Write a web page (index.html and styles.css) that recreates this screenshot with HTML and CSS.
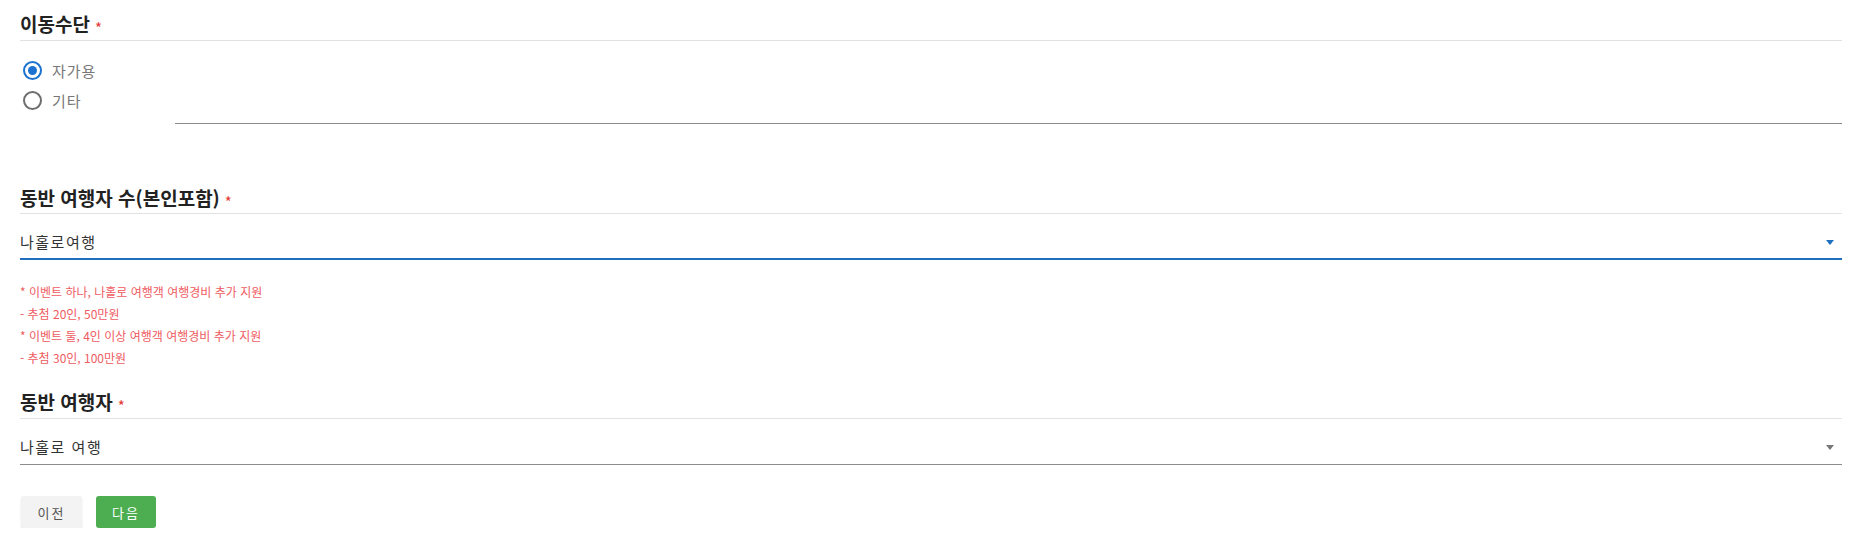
FILE: index.html
```html
<!DOCTYPE html>
<html lang="ko">
<head>
<meta charset="utf-8">
<title>여행 신청</title>
<link rel="stylesheet" href="styles.css">
</head>
<body>
<form class="page">
  <section class="field field-first">
    <h3 class="field-title">이동수단<span class="req">*</span></h3>
    <div class="transport-row">
      <div class="radio-group">
        <label class="radio-item">
          <span class="radio checked"></span>
          <span class="radio-label">자가용</span>
        </label>
        <label class="radio-item">
          <span class="radio"></span>
          <span class="radio-label">기타</span>
        </label>
      </div>
      <div class="other-input"></div>
    </div>
  </section>

  <section class="field field-second">
    <h3 class="field-title">동반 여행자 수(본인포함)<span class="req">*</span></h3>
    <div class="select select-active">
      <span class="select-value">나홀로여행</span>
      <span class="arrow arrow-blue"></span>
    </div>
    <ul class="notes">
      <li>* 이벤트 하나, 나홀로 여행객 여행경비 추가 지원</li>
      <li>- 추첨 20인, 50만원</li>
      <li>* 이벤트 둘, 4인 이상 여행객 여행경비 추가 지원</li>
      <li>- 추첨 30인, 100만원</li>
    </ul>
  </section>

  <section class="field field-third">
    <h3 class="field-title">동반 여행자<span class="req">*</span></h3>
    <div class="select select-plain">
      <span class="select-value">나홀로 여행</span>
      <span class="arrow arrow-gray"></span>
    </div>
  </section>

  <div class="actions">
    <button type="button" class="btn btn-prev">이전</button>
    <button type="button" class="btn btn-next">다음</button>
  </div>
</form>
</body>
</html>
```

FILE: styles.css
```css
* { box-sizing: border-box; }

html, body {
  margin: 0;
  padding: 0;
  background: #ffffff;
}

body {
  font-family: "Noto Sans CJK KR", "Noto Sans", sans-serif;
  color: #222222;
}

.page {
  width: 1842px;
  margin: 0;
  padding: 11px 0 0 20px;
}

.field-title {
  margin: 0;
  font-size: 19px;
  font-weight: 700;
  line-height: 26px;
  color: #222222;
  padding-bottom: 3px;
  border-bottom: 1px solid #e2e2e2;
  display: flex;
  align-items: center;
}

.req {
  color: #e53935;
  font-size: 15px;
  font-weight: 400;
  line-height: 1;
  margin-left: 5px;
  position: relative;
  top: 3px;
}

.transport-row {
  display: flex;
  align-items: flex-start;
  margin-top: 14px;
}

.radio-group {
  width: 155px;
  display: flex;
  flex-direction: column;
}

.radio-item {
  display: flex;
  align-items: center;
  height: 30px;
}

.radio {
  width: 19px;
  height: 19px;
  margin-left: 3px;
  border-radius: 50%;
  border: 2px solid #6e6e6e;
  position: relative;
}

.radio.checked {
  border-color: #1c72d0;
}

.radio.checked::after {
  content: "";
  position: absolute;
  left: 3px;
  top: 3px;
  width: 9px;
  height: 9px;
  border-radius: 50%;
  background: #1c72d0;
}

.radio-label {
  margin-left: 10px;
  font-size: 15px;
  color: #777777;
  letter-spacing: 1px;
}

.other-input {
  flex: 1;
  margin-top: 38px;
  height: 31px;
  border-bottom: 1px solid #8c8c8c;
}

.field-second {
  margin-top: 61px;
}

.field-second .field-title {
  padding-bottom: 2px;
}

.select {
  display: flex;
  align-items: center;
  justify-content: space-between;
  padding: 18px 8px 0 0;
}

.select-active {
  border-bottom: 2px solid #1e6fbe;
  padding-bottom: 6px;
  height: 46px;
}

.select-plain {
  border-bottom: 1px solid #8c8c8c;
  height: 46px;
  padding-bottom: 7px;
}

.select-value {
  font-size: 15px;
  line-height: 20px;
  color: #333333;
  letter-spacing: 1.5px;
}

.arrow {
  width: 0;
  height: 0;
  border-left: 4.5px solid transparent;
  border-right: 4.5px solid transparent;
  border-top: 5px solid #1e6fbe;
}

.arrow-gray {
  border-top-color: #777777;
}

.notes {
  list-style: none;
  margin: 21px 0 0 0;
  padding: 0;
}

.notes li {
  font-size: 12px;
  line-height: 22px;
  color: #ef5b5f;
}

.field-third {
  margin-top: 20px;
}

.actions {
  display: flex;
  gap: 14px;
  margin-top: 31px;
  padding-left: 1px;
}

.btn {
  height: 32px;
  border: none;
  border-radius: 3px;
  font-family: "Noto Sans CJK KR", "Noto Sans", sans-serif;
  font-size: 13px;
  letter-spacing: 2px;
  padding: 0;
  cursor: pointer;
}

.btn-prev {
  width: 61px;
  background: #f3f3f3;
  color: #555555;
  box-shadow: 0 1px 2px rgba(0, 0, 0, 0.12);
}

.btn-next {
  width: 60px;
  background: #4cae50;
  color: #ffffff;
}
```
